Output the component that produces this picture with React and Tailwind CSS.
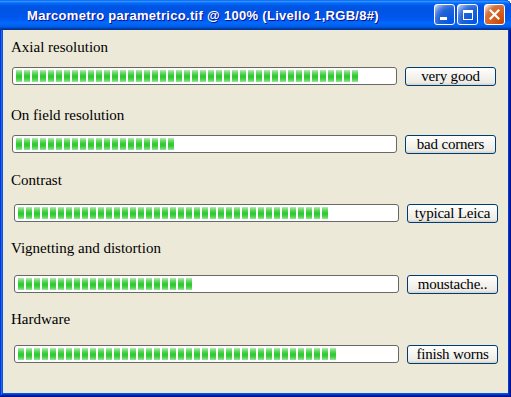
import React from "react";

const rows = [
    { label: "Axial resolution", button: "very good", blocks: 43, labelTop: "mt-[9px]", barTop: "mt-[11px]", barLeft: "ml-[9px]" },
    { label: "On field resolution", button: "bad corners", blocks: 20, labelTop: "mt-[21px]", barTop: "mt-[11px]", barLeft: "ml-[9px]" },
    { label: "Contrast", button: "typical Leica", blocks: 39, labelTop: "mt-[18px]", barTop: "mt-[15px]", barLeft: "ml-[11px]" },
    { label: "Vignetting and distortion", button: "moustache..", blocks: 22, labelTop: "mt-[17px]", barTop: "mt-[18px]", barLeft: "ml-[11px]" },
    { label: "Hardware", button: "finish worns", blocks: 40, labelTop: "mt-[17px]", barTop: "mt-[17px]", barLeft: "ml-[11px]" },
];

function TitleButton({ kind }) {
    const face =
        kind === "close"
            ? "bg-[radial-gradient(circle_at_90%_90%,#cc4600_0%,#dc6527_55%,#cd7546_70%,#ffccb2_90%,#fff_100%)]"
            : "bg-[radial-gradient(circle_at_90%_90%,#0054e9_0%,#2263d5_55%,#4479e4_70%,#a3bbec_90%,#fff_100%)]";
    return (
        <div className={`relative w-[21px] h-[21px] rounded-[3px] border border-white ${face}`}>
            {kind === "min" && <div className="absolute left-[5px] top-[12px] w-[7px] h-[3px] bg-white" />}
            {kind === "max" && (
                <div className="absolute left-[5px] top-[5px] w-[10px] h-[10px] border border-white border-t-[3px]" />
            )}
            {kind === "close" && (
                <svg className="absolute left-[4px] top-[4px]" width="11" height="11" viewBox="0 0 11 11">
                    <path d="M1.5 1.5 L9.5 9.5 M9.5 1.5 L1.5 9.5" stroke="white" strokeWidth="2.2" strokeLinecap="square" />
                </svg>
            )}
        </div>
    );
}

function Meter({ row }) {
    const chunks = Array.from({ length: row.blocks });
    return (
        <div className="flex flex-col">
            <div className={`${row.labelTop} pl-[8px] text-[15px] leading-[17px] text-black`}>{row.label}</div>
            <div className={`${row.barTop} flex items-start`}>
                <div
                    className={`${row.barLeft} w-[385px] h-[18px] border border-[#686868] rounded-[3px] bg-white pl-[3px] pt-[2px] flex gap-[2px]`}
                >
                    {chunks.map((_, i) => (
                        <div
                            key={i}
                            className="w-[6px] h-[12px] bg-[linear-gradient(180deg,#b2eeb2_0%,#74dc74_20%,#36cd36_45%,#2ec92e_60%,#52d452_80%,#9be49b_100%)]"
                        />
                    ))}
                </div>
                <button className="ml-[8px] w-[91px] h-[19px] border border-[#003c74] rounded-[3px] bg-[linear-gradient(180deg,#ffffff_0%,#f4f3ee_50%,#ecebe6_85%,#d6d0c5_100%)] text-[15px] leading-[15px] tracking-[-0.2px] text-black flex items-center justify-center whitespace-nowrap">
                    {row.button}
                </button>
            </div>
        </div>
    );
}

export default function App() {
    return (
        <div className="w-[511px] h-[397px] bg-white font-['Liberation_Serif',serif]">
            <div className="w-full h-full flex flex-col rounded-tr-[6px] bg-[#0855dd] shadow-[inset_-1px_-1px_#00138c,inset_1px_1px_#0831d9,inset_-2px_-2px_#001ea0,inset_2px_2px_#166aee,inset_-3px_-3px_#003bda,inset_3px_3px_#0855dd] overflow-hidden">
                <div className="h-[30px] shrink-0 flex items-center justify-between pl-[27px] pr-[6px] rounded-tr-[6px] bg-[linear-gradient(180deg,#0058ee_0%,#3593ff_4%,#288eff_6%,#127dff_8%,#036ffc_10%,#0262ee_14%,#0057e5_20%,#0054e3_24%,#0055eb_56%,#005bf5_66%,#026afe_76%,#0062ef_86%,#0052d6_92%,#0040ab_94%,#003092_100%)]">
                    <span className="font-['Liberation_Sans',sans-serif] font-bold text-[13px] tracking-[0.3px] text-white leading-none pt-[1px] [text-shadow:1px_1px_#0f1089]">
                        Marcometro parametrico.tif @ 100% (Livello 1,RGB/8#)
                    </span>
                    <div className="flex items-center gap-[2px] mt-[-1px]">
                        <TitleButton kind="min" />
                        <TitleButton kind="max" />
                        <div className="w-[2px]" />
                        <TitleButton kind="close" />
                    </div>
                </div>
                <div className="flex-1 mx-[3px] mb-[4px] bg-[#ece9d8] flex flex-col">
                    {rows.map((row) => (
                        <Meter key={row.label} row={row} />
                    ))}
                </div>
            </div>
        </div>
    );
}
